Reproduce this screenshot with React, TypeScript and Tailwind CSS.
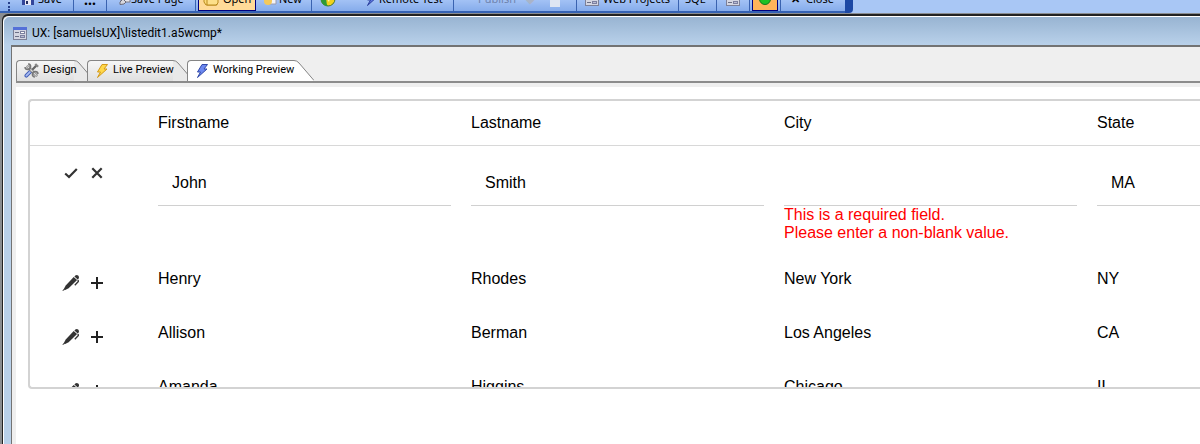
import React from "react";

type Person = { first: string; last: string; city: string; state: string };

const people: Person[] = [
  { first: "Henry", last: "Rhodes", city: "New York", state: "NY" },
  { first: "Allison", last: "Berman", city: "Los Angeles", state: "CA" },
  { first: "Amanda", last: "Higgins", city: "Chicago", state: "IL" },
];

function Separator() {
  return <span className="h-6 w-px shrink-0 bg-[#3a63b0]" />;
}

function ToolButton({ className = "", label, children }: { className?: string; label: string; children?: React.ReactNode }) {
  return (
    <button type="button" aria-label={label} className={"flex h-6 shrink-0 items-center whitespace-nowrap " + className}>
      {children}
    </button>
  );
}

function SaveIcon() {
  return (
    <svg width="12" height="12" viewBox="0 0 12 12" aria-hidden="true">
      <path d="M0 0h11l1 1v11H0z" fill="#33459a" />
      <rect x="3" y="7" width="6" height="5" fill="#e8e8f4" />
      <rect x="4" y="8" width="2" height="3" fill="#222c60" />
    </svg>
  );
}

function SavePageIcon() {
  return (
    <svg width="12" height="14" viewBox="0 0 12 14" aria-hidden="true">
      <path d="M2 0h9v10H2z" fill="#e6e6ec" stroke="#7a7a88" />
      <path d="M1 12.500V10l3-3 3 3-2 2z" fill="#d8d8de" stroke="#6a6a78" />
    </svg>
  );
}

function FolderIcon() {
  return (
    <svg width="16" height="14" viewBox="0 0 16 14" aria-hidden="true">
      <path d="M1 2h5l1 2h7v9H3l-2-3z" fill="#fbdc7c" stroke="#b98a1c" />
      <path d="M4 4h11v7l-2 2H4z" fill="#fde08a" stroke="#b98a1c" />
    </svg>
  );
}

function NewIcon() {
  return (
    <svg width="13" height="14" viewBox="0 0 13 14" aria-hidden="true">
      <path d="M4 0h8v12H4z" fill="#f3f3f8" stroke="#9a9aac" />
      <circle cx="4" cy="9" r="4" fill="#f4c95c" />
    </svg>
  );
}

function BallIcon() {
  return (
    <svg width="16" height="16" viewBox="0 0 16 16" aria-hidden="true">
      <circle cx="8" cy="8" r="7" fill="#f1d21c" stroke="#44762c" />
      <path d="M1 8a7 7 0 0 0 3 6c2 1 3 1 4 1-2-2-1-4-2-7z" fill="#2c9a36" />
      <path d="M7 8l3-1-1 4z" fill="#fff7b8" />
    </svg>
  );
}

function Bolt({ fill, stroke }: { fill: string; stroke: string }) {
  return (
    <svg width="14" height="16" viewBox="0 0 14 16" className="shrink-0" aria-hidden="true">
      <path d="M7 1.500h5.500L9 6h3L2.500 14.500 5.500 9H2.500z" fill={fill} stroke={stroke} strokeLinejoin="round" />
    </svg>
  );
}

function FormIcon() {
  return (
    <svg width="14" height="13" viewBox="0 0 14 13" className="shrink-0" aria-hidden="true">
      <rect x=".5" y=".5" width="13" height="12" fill="#d4d6e2" stroke="#7c8098" />
      <rect x="0" y="0" width="14" height="3" fill="#5470d8" />
      <path d="M2 5.500h4M2 9.500h4" stroke="#6c7086" />
      <rect x="7.500" y="4.500" width="4" height="2" fill="#fff" stroke="#7c80a0" />
      <rect x="7.500" y="8.500" width="4" height="2" fill="#b8bcd4" stroke="#7c80a0" />
    </svg>
  );
}

function ToolsIcon() {
  return (
    <svg width="15" height="15" viewBox="0 0 16 16" className="shrink-0" aria-hidden="true">
      <path d="M13 3L8 8" stroke="#666" strokeWidth="2.400" strokeLinecap="round" />
      <path d="M12 1l3 3" stroke="#888" strokeWidth="2.400" />
      <path d="M6.500 9.500l-4 4" stroke="#4460b8" strokeWidth="4" strokeLinecap="round" />
      <path d="M6.500 9.500l-4 4" stroke="#a9bcf2" strokeWidth="1.800" strokeLinecap="round" />
      <path d="M4 4l9 9" stroke="#777" strokeWidth="3" strokeLinecap="round" />
      <path d="M4 4l9 9" stroke="#dadada" strokeWidth="1.400" strokeLinecap="round" />
      <path d="M4.500 1A3 3 0 1 1 1 4.500M15 11.500A3 3 0 1 0 11.500 15" fill="none" stroke="#777" strokeWidth="1.800" />
    </svg>
  );
}

function CheckIcon() {
  return (
    <svg width="14" height="14" viewBox="0 0 14 14" aria-hidden="true">
      <path d="M1.200 7.500l3.800 3.500 7.800-8" fill="none" stroke="#333" strokeWidth="2.200" />
    </svg>
  );
}

function CrossIcon() {
  return (
    <svg width="14" height="14" viewBox="0 0 14 14" aria-hidden="true">
      <path d="M2.300 2.300l9.400 9.400M11.700 2.300l-9.400 9.400" stroke="#333" strokeWidth="2.200" />
    </svg>
  );
}

function PenIcon() {
  return (
    <svg width="18" height="18" viewBox="0 0 18 18" aria-hidden="true">
      <path d="M13.300 1.500q1.500-1.200 2.900.1t.5 2.900l-1 1-3.300-3z" fill="#333" />
      <path d="M11.700 2.900l3.400 3.100-8.500 8.300-3.900 1.900-1-.9 2-3.900z" fill="#333" />
      <path d="M2.500 14.500L.8 17" stroke="#444" />
      <path d="M15.600 6q1.300.7.500 1.800l-3.300 3.400" fill="none" stroke="#333" strokeWidth="1.300" />
    </svg>
  );
}

function PlusIcon() {
  return (
    <svg width="14" height="14" viewBox="0 0 14 14" aria-hidden="true">
      <path d="M7 1v12M1 7h12" stroke="#222" strokeWidth="2" />
    </svg>
  );
}

function Toolbar() {
  return (
    <div className="h-[13px] overflow-hidden bg-[#a9c7f5]">
      <div className="flex h-full w-[853px] max-w-full items-end rounded-br bg-[#1c48a4]">
        <div className="flex h-full min-w-0 flex-1 items-end border-b-2 border-[#3462b4] bg-linear-to-b from-[#a3c2f5] to-[#86aceb] text-[11px] text-black">
          <span className="mr-3 ml-2 h-6 shrink-0 border-l-2 border-dotted border-[#27418c]" />
          <ToolButton label="Save" className="w-[51px] gap-1"><SaveIcon />Save</ToolButton>
          <Separator />
          <ToolButton label="More" className="w-8 justify-center text-[14px] font-bold">...</ToolButton>
          <Separator />
          <ToolButton label="Save Page" className="w-[88px] pl-3"><SavePageIcon />Save Page</ToolButton>
          <Separator />
          <ToolButton label="Open" className="ml-0.5 w-[58px] gap-1 border border-[#000080] bg-[#ffdb98] pl-1"><FolderIcon />Open</ToolButton>
          <ToolButton label="New" className="w-[55px] gap-0.5 pl-2"><NewIcon />New</ToolButton>
          <Separator />
          <ToolButton label="Browser" className="w-[53px] pl-2"><BallIcon /></ToolButton>
          <ToolButton label="Remote Test" className="w-[88px]"><Bolt fill="#5c78e4" stroke="#2c3f9c" />Remote Test</ToolButton>
          <Separator />
          <ToolButton label="Publish" className="w-[72px] pl-6 text-[#6f83ad]">Publish</ToolButton>
          <ToolButton label="Upload" className="w-6 text-[#a9b4c8]">◆</ToolButton>
          <ToolButton label="Document" className="w-[26px]">
            <span className="h-4 w-2.5 bg-[#dfe6f2]" />
          </ToolButton>
          <Separator />
          <ToolButton label="Web Projects" className="w-[101px] gap-1 pl-2"><FormIcon />Web Projects</ToolButton>
          <Separator />
          <ToolButton label="SQL" className="w-[37px] pl-1.5">SQL</ToolButton>
          <Separator />
          <ToolButton label="Form" className="w-8 justify-center"><FormIcon /></ToolButton>
          <Separator />
          <ToolButton label="Run" className="mx-0.5 w-[26px] justify-center border border-[#000080] bg-[#ffb45c]">
            <span className="size-3 rounded-full border border-[#15781c] bg-[#20c224]" />
          </ToolButton>
          <Separator />
          <ToolButton label="Close" className="gap-1.5 pl-2.5"><b>✕</b>Close</ToolButton>
        </div>
        <span className="w-2 shrink-0" />
      </div>
    </div>
  );
}

function Tab({ label, icon, active = false, className }: { label: string; icon: React.ReactNode; active?: boolean; className: string }) {
  return (
    <button type="button" role="tab" aria-selected={active} className={"relative flex h-[21px] shrink-0 items-center pl-2 text-[11px] whitespace-nowrap " + className}>
      <svg className="absolute inset-y-0 right-0 h-full w-5" viewBox="0 0 20 21" preserveAspectRatio="none" aria-hidden="true">
        <path d="M0 .5Q3 .5 5 3L20 20.500V21H0z" fill={active ? "#fff" : "#e9e9e9"} />
        <path d="M0 .5Q3 .5 5 3L20 20.500" fill="none" stroke="#858585" />
      </svg>
      <span className={"absolute inset-y-0 right-5 left-0 rounded-tl border-t border-l border-[#858585] " + (active ? "bg-white" : "bg-linear-to-b from-[#f6f6f6] to-[#e0e0e0]")} />
      <span className="relative flex items-center gap-1">{icon}{label}</span>
    </button>
  );
}

const editorClass = "block h-[46px] w-[293px] border-b border-[#d0d0d0] bg-transparent px-3.5 pt-0.5 outline-none";

function ListEditor() {
  return (
    <div className="mt-3 ml-3 h-[290px] overflow-hidden rounded-l-sm border-2 border-r-0 border-[#d3d3d3]">
      <table className="w-[1380px] table-fixed border-collapse text-left text-[16px] leading-[18px]">
        <colgroup>
          <col className="w-32" />
          <col className="w-[313px]" />
          <col className="w-[313px]" />
          <col className="w-[313px]" />
          <col className="w-[313px]" />
        </colgroup>
        <thead>
          <tr className="h-11 border-b border-[#d8d8d8]">
            <td />
            <th className="p-0 font-normal">Firstname</th>
            <th className="p-0 font-normal">Lastname</th>
            <th className="p-0 font-normal">City</th>
            <th className="p-0 font-normal">State</th>
          </tr>
        </thead>
        <tbody>
          <tr className="align-top">
            <td className="pt-5 pl-[34px]">
              <div className="flex gap-3">
                <button type="button" aria-label="Accept"><CheckIcon /></button>
                <button type="button" aria-label="Cancel"><CrossIcon /></button>
              </div>
            </td>
            <td className="pt-3.5"><input aria-label="Firstname" className={editorClass} defaultValue="John" /></td>
            <td className="pt-3.5"><input aria-label="Lastname" className={editorClass} defaultValue="Smith" /></td>
            <td className="pt-3.5 pb-2.5">
              <input aria-label="City" aria-invalid="true" aria-describedby="city-error" className={editorClass} defaultValue="" />
              <p id="city-error" className="text-[#ff0000]">This is a required field.<br />Please enter a non-blank value.</p>
            </td>
            <td className="pt-3.5"><input aria-label="State" className={editorClass} defaultValue="MA" /></td>
          </tr>
          {people.map((p) => (
            <tr key={p.first} className="h-[54px]">
              <td className="pt-2 pl-8">
                <div className="flex items-center gap-2.5">
                  <button type="button" aria-label={"Edit " + p.first}><PenIcon /></button>
                  <button type="button" aria-label={"Add after " + p.first}><PlusIcon /></button>
                </div>
              </td>
              <td>{p.first}</td>
              <td>{p.last}</td>
              <td>{p.city}</td>
              <td>{p.state}</td>
            </tr>
          ))}
        </tbody>
      </table>
    </div>
  );
}

export default function App() {
  return (
    <div className="flex min-h-screen flex-col overflow-hidden bg-[#8a8d90] font-['Noto_Sans',sans-serif] text-black">
      <Toolbar />
      <div className="ml-0.5 flex flex-1 flex-col pt-px font-[Roboto,sans-serif]">
        <div className="flex flex-1 flex-col rounded-tl-md border-t-2 border-l border-[#222]">
          <div className="flex flex-1 flex-col rounded-tl-md border-t border-l border-white bg-[#b9d1ea]">
            <div className="flex h-7 items-center gap-[5px] rounded-tl-md bg-linear-to-b from-[#98b4d2] to-[#b9d1ea] pt-1 pl-[9px] text-[12px]">
              <FormIcon />
              <h1>UX: [samuelsUX]\listedit1.a5wcmp*</h1>
            </div>
            <main className="ml-[7px] flex flex-1 flex-col border-t-2 border-l border-[#737373] bg-[#efefef] pl-1">
              <div role="tablist" className="flex border-b-2 border-[#8c8c8c] pt-[13px]">
                <Tab label="Design" className="z-0 w-[78px]" icon={<ToolsIcon />} />
                <Tab label="Live Preview" className="-ml-[7px] w-[106px]" icon={<Bolt fill="#ffd84a" stroke="#d49a18" />} />
                <Tab label="Working Preview" active className="z-10 -ml-1.5 w-[127px]" icon={<Bolt fill="#6c88f0" stroke="#3048a8" />} />
              </div>
              <div className="mt-1 flex-1 bg-white font-['Liberation_Sans',Arial,sans-serif]">
                <ListEditor />
              </div>
            </main>
          </div>
        </div>
      </div>
    </div>
  );
}
